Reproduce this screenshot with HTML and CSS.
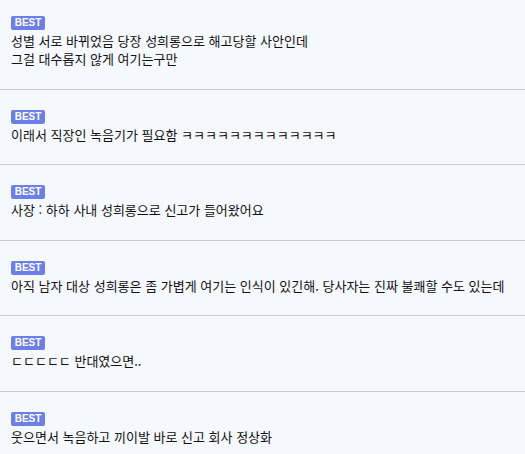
FILE: index.html
```html
<!DOCTYPE html>
<html lang="ko">
<head>
<meta charset="utf-8">
<link rel="stylesheet" href="styles.css">
</head>
<body>
<ul class="list">
  <li class="item">
    <span class="badge">BEST</span>
    <p class="text">성별 서로 바뀌었음 당장 성희롱으로 해고당할 사안인데<br>그걸 대수롭지 않게 여기는구만</p>
  </li>
  <li class="item">
    <span class="badge">BEST</span>
    <p class="text">이래서 직장인 녹음기가 필요함 ㅋㅋㅋㅋㅋㅋㅋㅋㅋㅋㅋㅋㅋ</p>
  </li>
  <li class="item">
    <span class="badge">BEST</span>
    <p class="text">사장 : 하하 사내 성희롱으로 신고가 들어왔어요</p>
  </li>
  <li class="item">
    <span class="badge">BEST</span>
    <p class="text">아직 남자 대상 성희롱은 좀 가볍게 여기는 인식이 있긴해. 당사자는 진짜 불쾌할 수도 있는데</p>
  </li>
  <li class="item">
    <span class="badge">BEST</span>
    <p class="text">ㄷㄷㄷㄷㄷ 반대였으면..</p>
  </li>
  <li class="item">
    <span class="badge">BEST</span>
    <p class="text">웃으면서 녹음하고 끼이발 바로 신고 회사 정상화</p>
  </li>
</ul>
</body>
</html>
```
FILE: styles.css
```css
html, body {
  margin: 0;
  padding: 0;
  background: #f5f8fd;
}
body {
  font-family: "Noto Sans CJK KR", "Noto Sans", sans-serif;
  color: #111;
}
.list {
  list-style: none;
  margin: 0;
  padding: 0;
}
.item {
  display: flex;
  flex-direction: column;
  align-items: flex-start;
  padding: 20px 11px 20.5px;
  border-bottom: 1px solid #c9cacf;
}
.item:first-child {
  padding-top: 16px;
}
.badge {
  display: inline-block;
  background: #6b7fe6;
  color: #fff;
  font-family: "Liberation Sans", Arial, sans-serif;
  font-weight: bold;
  font-size: 10px;
  line-height: 14px;
  height: 14px;
  width: 34px;
  text-align: center;
  border-radius: 2px;
  margin-bottom: 2px;
}
.text {
  margin: 0;
  font-size: 13px;
  line-height: 18px;
}
```
